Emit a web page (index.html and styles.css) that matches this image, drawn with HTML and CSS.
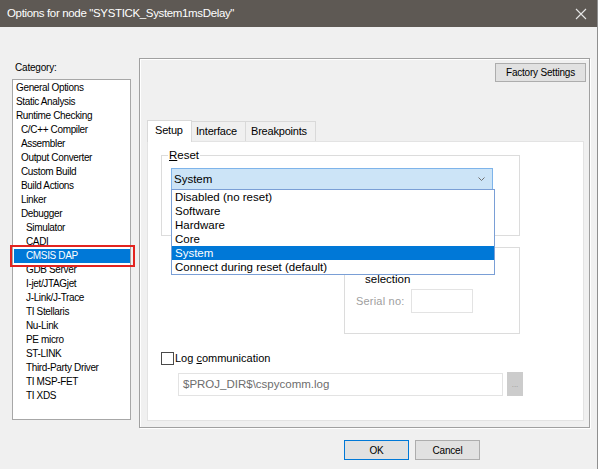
FILE: index.html
```html
<!DOCTYPE html>
<html lang="en">
<head>
    <meta charset="UTF-8">
    <title>Options for node</title>
    <link rel="stylesheet" href="styles.css">
</head>
<body>
    <div class="window">
        <div class="titlebar">
            <span class="title">Options for node "SYSTICK_System1msDelay"</span>
            <svg class="close" width="12" height="12" viewBox="0 0 12 12">
                <path d="M1 1 L11 11 M11 1 L1 11" stroke="#e6e6e6" stroke-width="1.1" fill="none"/>
            </svg>
        </div>

        <div class="main">
            <div class="category-col">
                <div class="category-label">Category:</div>
                <ul class="category-list">
                    <li class="lvl0">General Options</li>
                    <li class="lvl0">Static Analysis</li>
                    <li class="lvl0">Runtime Checking</li>
                    <li class="lvl1">C/C++ Compiler</li>
                    <li class="lvl1">Assembler</li>
                    <li class="lvl1">Output Converter</li>
                    <li class="lvl1">Custom Build</li>
                    <li class="lvl1">Build Actions</li>
                    <li class="lvl1">Linker</li>
                    <li class="lvl1">Debugger</li>
                    <li class="lvl2">Simulator</li>
                    <li class="lvl2">CADI</li>
                    <li class="lvl2 selected">CMSIS DAP<span class="marker"></span></li>
                    <li class="lvl2">GDB Server</li>
                    <li class="lvl2">I-jet/JTAGjet</li>
                    <li class="lvl2">J-Link/J-Trace</li>
                    <li class="lvl2">TI Stellaris</li>
                    <li class="lvl2">Nu-Link</li>
                    <li class="lvl2">PE micro</li>
                    <li class="lvl2">ST-LINK</li>
                    <li class="lvl2">Third-Party Driver</li>
                    <li class="lvl2">TI MSP-FET</li>
                    <li class="lvl2">TI XDS</li>
                </ul>
            </div>

            <div class="options-panel">
                <button class="win-btn factory-btn">Factory Settings</button>

                <div class="tabs">
                    <div class="tab active">Setup</div>
                    <div class="tab">Interface</div>
                    <div class="tab">Breakpoints</div>
                </div>

                <div class="tab-page">
                    <div class="group reset-group">
                        <span class="group-label"><u>R</u>eset</span>
                        <div class="combo">
                            <span>System</span>
                            <svg class="combo-arrow" width="7" height="4" viewBox="0 0 7 4">
                                <path d="M0.5 0.5 L3.5 3.5 L6.5 0.5" stroke="#707070" stroke-width="1" fill="none"/>
                            </svg>
                            <ul class="dropdown">
                                <li>Disabled (no reset)</li>
                                <li>Software</li>
                                <li>Hardware</li>
                                <li>Core</li>
                                <li class="selected">System</li>
                                <li>Connect during reset (default)</li>
                            </ul>
                        </div>
                    </div>

                    <div class="probe-row">
                        <div class="group probe-group">
                            <div class="probe-text">selection</div>
                            <div class="serial-row">
                                <span class="serial-label">Serial no:</span>
                                <span class="serial-input"></span>
                            </div>
                        </div>
                    </div>

                    <div class="log-row">
                        <span class="checkbox"></span>
                        <span>Log <u>c</u>ommunication</span>
                    </div>

                    <div class="path-row">
                        <div class="path-input">$PROJ_DIR$\cspycomm.log</div>
                        <div class="browse-btn">...</div>
                    </div>
                </div>
            </div>
        </div>

        <div class="footer">
            <button class="win-btn default">OK</button>
            <button class="win-btn">Cancel</button>
        </div>
    </div>
</body>
</html>
```

FILE: styles.css
```css
* {
    margin: 0;
    padding: 0;
    box-sizing: border-box;
}

body {
    width: 598px;
    height: 469px;
    overflow: hidden;
    background: #f0f0f0;
    font-family: 'Liberation Sans', Arial, sans-serif;
    color: #000;
}

.window {
    width: 598px;
    height: 469px;
    border-right: 1px solid #8f8f8f;
}

.titlebar {
    height: 27px;
    background: #5e5954;
    color: #fff;
    display: flex;
    align-items: center;
    justify-content: space-between;
    padding: 0 10px 1px 7px;
}

.title {
    font-size: 11.5px;
    letter-spacing: -0.35px;
}

.close {
    margin-top: 1px;
}

.main {
    display: flex;
    gap: 8px;
    padding: 31px 0 0 12px;
}

/* left column */
.category-col {
    width: 119px;
    padding-top: 3px;
}

.category-label {
    font-size: 10px;
    letter-spacing: -0.2px;
    height: 14px;
    line-height: 14px;
    padding-left: 3px;
    margin-bottom: 4px;
}

.category-list {
    list-style: none;
    background: #fff;
    border: 1px solid #a7a7a7;
    height: 341px;
    padding-top: 1px;
}

.category-list li {
    height: 14px;
    line-height: 14px;
    font-size: 10px;
    letter-spacing: -0.35px;
    white-space: nowrap;
}

.lvl0 { padding-left: 3px; }
.lvl1 { padding-left: 8px; }
.lvl2 { padding-left: 13px; }

.category-list li.selected {
    position: relative;
    background: #0078d7;
    color: #fff;
    margin: 0 0 0 1px;
    padding-left: 12px;
}

.marker {
    position: absolute;
    left: -4px;
    top: -4px;
    right: -5px;
    bottom: -4px;
    border: 2px solid #e3231f;
}

/* right panel */
.options-panel {
    width: 451px;
    height: 370px;
    border: 1px solid #a0a0a0;
    box-shadow: inset 1px 1px 0 #fff, 1px 1px 0 #fff;
    padding: 4px 3px 6px 7px;
    display: flex;
    flex-direction: column;
}

.win-btn {
    font-family: 'Liberation Sans', Arial, sans-serif;
    font-size: 10px;
    letter-spacing: -0.2px;
    background: #e1e1e1;
    border: 1px solid #adadad;
    color: #000;
    height: 20px;
}

.factory-btn {
    align-self: flex-end;
    width: 91px;
    height: 19px;
}

.tabs {
    display: flex;
    align-items: flex-end;
    margin-top: 37px;
    height: 22px;
}

.tab {
    height: 20px;
    line-height: 19px;
    font-size: 11px;
    letter-spacing: -0.2px;
    padding: 0 7px;
    border: 1px solid #d9d9d9;
    border-bottom: none;
    background: #f0f0f0;
}

.tab + .tab {
    margin-left: -1px;
}

.tab.active {
    height: 22px;
    background: #fff;
    width: 45px;
    padding-left: 7px;
    position: relative;
    z-index: 1;
    margin-bottom: -1px;
}

.tab:nth-child(2) { width: 55px; padding-left: 4px; }
.tab:nth-child(3) { width: 71px; padding-left: 5px; }

.tab-page {
    width: 437px;
    height: 281px;
    background: #fff;
    border: 1px solid #e3e3e3;
    padding: 13px 0 0 13px;
    font-size: 11px;
}

.group {
    border: 1px solid #dcdcdc;
    position: relative;
}

.reset-group {
    width: 359px;
    height: 81px;
    padding: 12px 0 0 9px;
}

.group-label {
    position: absolute;
    top: -8px;
    left: 6px;
    padding: 0 1px;
    background: #fff;
    line-height: 14px;
    font-size: 11.5px;
}

.combo {
    position: relative;
    width: 322px;
    height: 22px;
    background: #cce4f7;
    border: 1px solid #7eb4ea;
    display: flex;
    align-items: center;
    justify-content: space-between;
    padding: 0 7px 0 2px;
    font-size: 11.5px;
    z-index: 2;
}

.dropdown {
    position: absolute;
    left: -1px;
    top: 20px;
    width: 324px;
    list-style: none;
    background: #fff;
    border: 1px solid #7a9fd6;
}

.dropdown li {
    height: 14px;
    line-height: 14px;
    padding-left: 3px;
    font-size: 11.5px;
    white-space: nowrap;
}

.dropdown li.selected {
    background: #0078d7;
    color: #fff;
}

.probe-row {
    width: 359px;
    display: flex;
    justify-content: flex-end;
    margin-top: 11px;
}

.probe-group {
    width: 176px;
    height: 87px;
    padding: 24px 0 0 11px;
}

.probe-text {
    padding-left: 9px;
    line-height: 14px;
    font-size: 11.5px;
}

.serial-row {
    display: flex;
    align-items: center;
    gap: 7px;
    margin-top: 3px;
}

.serial-label {
    color: #a0a0a0;
    font-size: 11px;
    letter-spacing: 0.2px;
}

.serial-input {
    width: 62px;
    height: 24px;
    border: 1px solid #e3e3e3;
}

.log-row {
    display: flex;
    align-items: center;
    gap: 1px;
    margin-top: 18px;
    height: 13px;
    font-size: 11px;
}

.checkbox {
    width: 13px;
    height: 13px;
    border: 1px solid #4a4a4a;
    background: #fff;
}

.path-row {
    display: flex;
    gap: 4px;
    margin: 7px 0 0 17px;
}

.path-input {
    width: 325px;
    height: 23px;
    margin-top: 1px;
    border: 1px solid #e3e3e3;
    color: #6d6d6d;
    font-size: 11.5px;
    line-height: 21px;
    padding-left: 4px;
}

.browse-btn {
    width: 16px;
    height: 24px;
    background: #cccccc;
    color: #9a9a9a;
    font-size: 8px;
    text-align: center;
    line-height: 26px;
}

.footer {
    display: flex;
    justify-content: flex-end;
    gap: 6px;
    padding: 12px 117px 0 0;
}

.footer .win-btn {
    width: 65px;
    height: 20px;
}

.footer .win-btn.default {
    border-color: #0078d7;
}
```
